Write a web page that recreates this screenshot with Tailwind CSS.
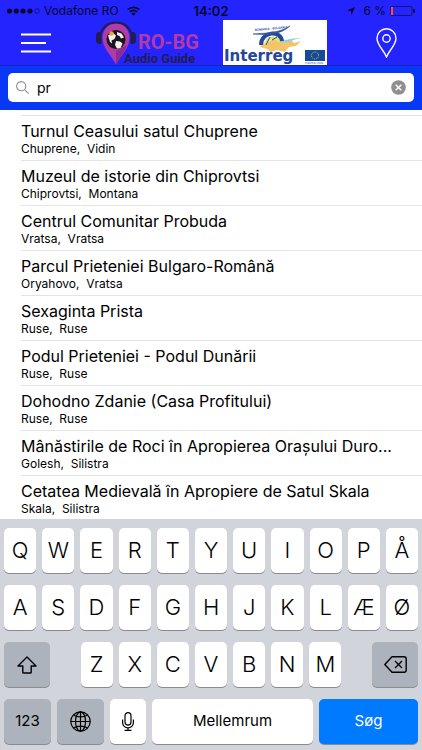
<!DOCTYPE html>
<html lang="ro">
<head>
  <meta charset="UTF-8" />
  <meta name="viewport" content="width=device-width, initial-scale=1" />
  <title>RO-BG Audio Guide</title>
  <script src="https://cdn.jsdelivr.net/npm/@tailwindcss/browser@4"></script>
</head>
<body class="h-screen flex flex-col overflow-hidden bg-white text-black font-[Inter,sans-serif]">

  <!-- Header -->
  <header class="bg-[#2424ff] border-b border-[#1a20c8] shrink-0">
    <!-- Status bar -->
    <div class="h-5 pt-[2px] px-[7px] grid grid-cols-[1fr_auto_1fr] items-center text-[12px] leading-[18px] text-[#08082c]">
      <div class="flex items-center gap-1">
        <svg class="w-[33px] h-2" viewBox="0 0 33 8" fill="currentColor">
          <circle cx="2.500" cy="4" r="2.600" /><circle cx="9.300" cy="4" r="2.600" /><circle cx="16" cy="4" r="2.600" /><circle cx="23" cy="4" r="2.600" />
          <circle cx="30" cy="4" r="2.300" fill="none" stroke="currentColor" stroke-width=".6" />
        </svg>
        <span>Vodafone RO</span>
        <svg class="ml-1 w-[13px] h-[10px]" viewBox="0 0 13 10" fill="none" stroke="currentColor" stroke-width="1.700">
          <path d="M.7 3.700a8.200 8.200 0 0 1 11.600 0M2.800 5.900a5.200 5.200 0 0 1 7.400 0" />
          <path d="M6.500 9.800 4.400 7.600a3 3 0 0 1 4.200 0z" fill="currentColor" stroke="none" />
        </svg>
      </div>
      <span class="font-semibold text-[13px]">14:02</span>
      <div class="flex items-center justify-end gap-1">
        <svg class="w-2 h-2 mr-1" viewBox="0 0 8 8" fill="currentColor"><path d="M8 0 4.500 8 4 4 0 3.500z" /></svg>
        <span>6 %</span>
        <svg class="w-[25px] h-[10px]" viewBox="0 0 25 10">
          <rect x=".5" y=".5" width="21.500" height="9" rx="1" fill="none" stroke="#11114d" stroke-width=".8" />
          <rect x="1" y="1" width="2" height="8" fill="#ff4658" />
          <path d="M23 3h1a1 1 0 0 1 1 1v2a1 1 0 0 1-1 1h-1z" fill="#11114d" />
        </svg>
      </div>
    </div>

    <!-- Menu, logos, map -->
    <nav class="h-[45px] pl-[21px] pr-[25px] flex items-center">
      <button aria-label="Menu" class="mr-[45px]">
        <svg class="block w-[30px] h-5" viewBox="0 0 30 20" stroke="#fff" stroke-width="2">
          <path d="M0 1.500h30M0 10h25M0 18.500h30" />
        </svg>
      </button>
      <svg class="w-[103px] h-[45px] mr-6 font-[Roboto,sans-serif]" viewBox="0 0 103 45" role="img" aria-label="RO-BG Audio Guide">
        <path d="M20 44.500C15 35 6.500 28 6.500 18a13.500 15 0 0 1 27 0C33.500 28 25 35 20 44.500z" fill="#b23aa6" />
        <path d="M20 44.500V31l11-6c-2.500 7-7.500 12.500-11 19.500z" fill="#8d2c93" />
        <path d="M4.500 14C7 6 13 2.500 20 2.500S33 6 35.500 14" fill="none" stroke="#211d4d" stroke-width="2" />
        <path d="M5.500 12v12H3.500a3.500 3.500 0 0 1-3.500-3.500v-5A3.500 3.500 0 0 1 3.500 12zM34.500 12v12h2a3.500 3.500 0 0 0 3.500-3.500v-5a3.500 3.500 0 0 0-3.500-3.500z" fill="#211d4d" />
        <circle cx="20" cy="19.500" r="9.500" fill="#19151f" />
        <path d="M12 15.500 17 13l3 2.500-1.500 3.500-3 1.500.5 3-2-1.500zM20 21l4 .5 2.500 2-2 4.500-3.500.5-2-3.500zM21 12l4.500 1.500 2.500 4-3 1-1.500-2.500-2.500-1z" fill="#f3eef2" />
        <circle cx="15.500" cy="13.500" r="2.200" fill="#eda42c" />
        <text x="42" y="29" font-size="20" font-weight="700" fill="#b23aa6">RO-BG</text>
        <text x="28" y="43" font-size="13" font-weight="700" fill="#211d4d">Audio Guide</text>
      </svg>
      <svg class="w-[104px] h-[45px] bg-white" viewBox="0 0 104 45" role="img" aria-label="Interreg Romania-Bulgaria">
        <path d="M37 27c3-5 8-3 11-7l9-3 5 4 6-1 3 3 7-2-5 5-7 1-4 5-8-2-6 2-4-3z" fill="#f5c469" />
        <path d="M52 19c9 4 15-2 26-1-8 1-12 6-21 4z" fill="#8ed5db" />
        <path d="M38 25c0-14 20-15 21-4" fill="none" stroke="#24479a" stroke-width="4" />
        <path d="M43 25c0-8 11-10 13-3" fill="none" stroke="#dce875" stroke-width="3" />
        <path d="m43 25 4-8m2 3 5-3" stroke="#24479a" stroke-width="1" />
        <path d="M30 14c14-1 26-1 37-8-10 9-22 9-37 8z" fill="#34549d" stroke="#34549d" stroke-width=".6" />
        <text x="32" y="11" font-size="3" font-weight="700" fill="#34549d" transform="rotate(-5 32 11)">ROMANIA - BULGARIA</text>
        <text x="1" y="41" font-size="15" font-weight="700" fill="#24479a" font-family="DejaVu Sans, sans-serif">Interreg</text>
        <rect x="82" y="30" width="20" height="11" fill="#174a94" />
        <circle cx="92" cy="35.500" r="3.500" fill="none" stroke="#e5d969" stroke-width="1" stroke-dasharray=".8 1.030" />
        <text x="82" y="44" font-size="2" fill="#24479a">EUROPEAN UNION</text>
      </svg>
      <button aria-label="Map" class="ml-auto">
        <svg class="block w-[21px] h-[30px]" viewBox="0 0 21 30" fill="none" stroke="#fff" stroke-width="1.400">
          <path d="M10.500 29C8 22 1 17.500 1 10.300a9.500 9.500 0 0 1 19 0C20 17.500 13 22 10.500 29z" />
          <circle cx="10.500" cy="10.500" r="3.700" />
        </svg>
      </button>
    </nav>
  </header>

  <!-- Search -->
  <form class="bg-[#0838f5] px-2 pt-[7px] pb-2 shrink-0">
    <div class="h-[29px] bg-white rounded-[5px] px-2 flex items-center gap-2">
      <svg class="w-[13px] h-[13px]" viewBox="0 0 13 13" fill="none" stroke="#8e8e93" stroke-width="1.100">
        <circle cx="5.200" cy="5.200" r="4.600" /><path d="m8.600 8.600 4 4" />
      </svg>
      <input type="text" value="pr" aria-label="Search" class="flex-1 min-w-0 text-[14px] leading-5 outline-none" />
      <button type="button" aria-label="Clear">
        <svg class="block w-[15px] h-[15px]" viewBox="0 0 15 15">
          <circle cx="7.500" cy="7.500" r="7.300" fill="#8e8e93" />
          <path d="m4.700 4.700 5.600 5.600m0-5.600-5.600 5.600" stroke="#fff" stroke-width="1.500" />
        </svg>
      </button>
    </div>
  </form>

  <!-- Results -->
  <main class="flex-1 min-h-0 overflow-hidden pt-[5px] pl-[21px]">
    <ul id="results"></ul>
  </main>

  <!-- Keyboard -->
  <section id="keyboard" class="shrink-0 bg-[#d1d4db] px-1 pt-[9px] pb-[6px] flex flex-col gap-3 text-[22px] font-light">
    <div class="flex gap-[6px]" data-keys="QWERTYUIOPÅ"></div>
    <div class="flex gap-[6px]" data-keys="ASDFGHJKLÆØ"></div>
    <div class="flex justify-between">
      <button aria-label="Shift" class="w-[11%] h-[45px] rounded-[5px] bg-[#acb3bd] shadow-[0_1px_0_#898b8f] flex items-center justify-center">
        <svg class="w-5 h-[18px]" viewBox="0 0 20 18" fill="none" stroke="#000" stroke-width="1.400" stroke-linejoin="round">
          <path d="M10 1 1 10h4.800v6.200a.8.8 0 0 0 .8.8h6.800a.8.8 0 0 0 .8-.8V10H19z" />
        </svg>
      </button>
      <div class="flex gap-[6px] w-[63%]" data-keys="ZXCVBNM"></div>
      <button aria-label="Delete" class="w-[11%] h-[45px] rounded-[5px] bg-[#acb3bd] shadow-[0_1px_0_#898b8f] flex items-center justify-center">
        <svg class="w-[23px] h-[17px]" viewBox="0 0 23 17" fill="none" stroke="#000" stroke-width="1.400" stroke-linejoin="round">
          <path d="M8 .8h12a2.200 2.200 0 0 1 2.200 2.200v11a2.200 2.200 0 0 1-2.200 2.200H8L.8 8.500z" />
          <path d="m11 5 7 7m0-7-7 7" />
        </svg>
      </button>
    </div>
    <div class="flex gap-[6px] text-[15px] font-normal">
      <button class="w-[47px] h-[45px] rounded-[5px] bg-[#acb3bd] shadow-[0_1px_0_#898b8f]">123</button>
      <button aria-label="Language" class="w-[47px] h-[45px] rounded-[5px] bg-[#acb3bd] shadow-[0_1px_0_#898b8f] flex items-center justify-center">
        <svg class="w-[21px] h-[21px]" viewBox="0 0 21 21" fill="none" stroke="#000" stroke-width="1.200">
          <circle cx="10.500" cy="10.500" r="9.700" /><ellipse cx="10.500" cy="10.500" rx="5" ry="9.700" />
          <path d="M10.500.8v19.400M.8 10.500h19.400M3.500 4c4 2.600 10 2.600 14 0M3.500 17c4-2.600 10-2.600 14 0" />
        </svg>
      </button>
      <button aria-label="Dictate" class="w-9 h-[45px] rounded-[5px] bg-white shadow-[0_1px_0_#898b8f] flex items-center justify-center">
        <svg class="w-3 h-[19px]" viewBox="0 0 12 19" fill="none" stroke="#000" stroke-width="1.200">
          <rect x="3" y=".6" width="6" height="12.500" rx="3" />
          <path d="M.6 7.500v3a5.400 5.400 0 0 0 10.800 0v-3M6 16v2.400M2.500 18.400h7" />
        </svg>
      </button>
      <button class="flex-1 h-[45px] rounded-[5px] bg-white shadow-[0_1px_0_#898b8f]">Mellemrum</button>
      <button class="w-[99px] h-[45px] rounded-[5px] bg-[#007aff] text-white shadow-[0_1px_0_#898b8f]">Søg</button>
    </div>
  </section>

  <script>
    const places = [
      ["Turnul Ceasului satul Chuprene", "Chuprene", "Vidin"],
      ["Muzeul de istorie din Chiprovtsi", "Chiprovtsi", "Montana"],
      ["Centrul Comunitar Probuda", "Vratsa", "Vratsa"],
      ["Parcul Prieteniei Bulgaro-Română", "Oryahovo", "Vratsa"],
      ["Sexaginta Prista", "Ruse", "Ruse"],
      ["Podul Prieteniei - Podul Dunării", "Ruse", "Ruse"],
      ["Dohodno Zdanie (Casa Profitului)", "Ruse", "Ruse"],
      ["Mânăstirile de Roci în Apropierea Orașului Duro...", "Golesh", "Silistra"],
      ["Cetatea Medievală în Apropiere de Satul Skala", "Skala", "Silistra"],
    ];

    // Result rows
    document.getElementById("results").innerHTML = places.map(([name, town, region]) => `
      <li class="h-[45px] border-t border-[#e4e4e6] pt-[5px]">
        <h2 class="text-[16px] leading-5 whitespace-nowrap">${name}</h2>
        <p class="text-[12px] leading-4 whitespace-pre">${town},  ${region}</p>
      </li>
    `).join("");

    // Letter keys
    document.querySelectorAll("[data-keys]").forEach((row) => {
      row.innerHTML = [...row.dataset.keys].map((key) => `
        <button class="flex-1 min-w-0 h-[45px] rounded-[5px] bg-white shadow-[0_1px_0_#898b8f]">${key}</button>
      `).join("");
    });
  </script>

</body>
</html>
